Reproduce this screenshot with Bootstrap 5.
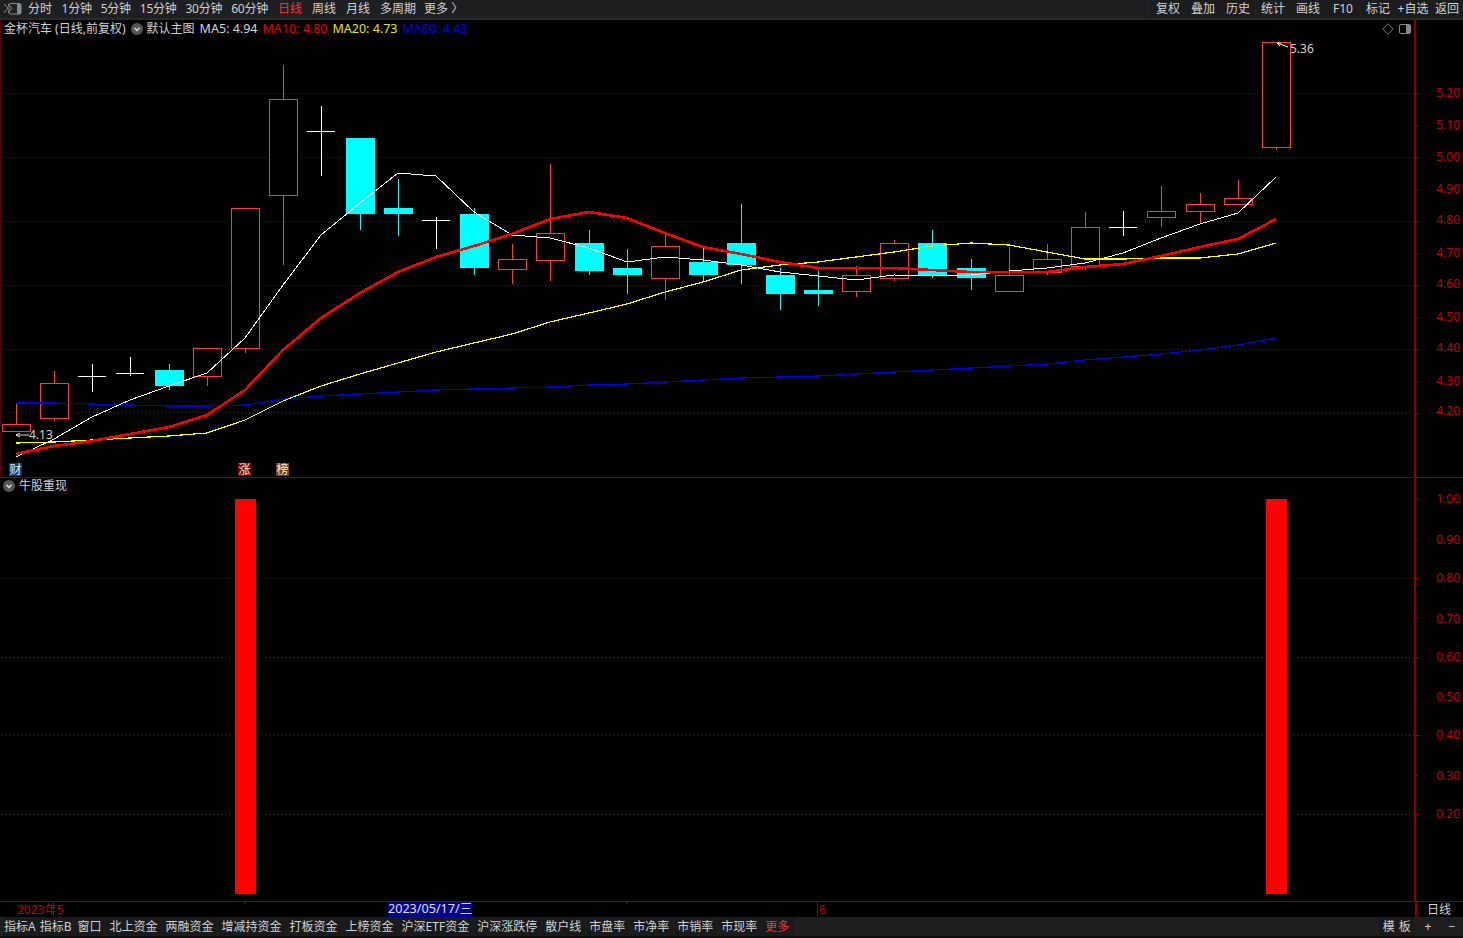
<!DOCTYPE html>
<html lang="zh-CN">
<head>
<meta charset="utf-8">
<title>金杯汽车</title>
<link href="https://cdn.jsdelivr.net/npm/bootstrap@5.3.0/dist/css/bootstrap.min.css" rel="stylesheet">
<style>
html,body{height:100%;background:#000;overflow:hidden}
.term{width:1463px;height:938px;background:#000;color:#d2d2d2;font:12px/1 "Noto Sans","Noto Sans CJK SC",sans-serif}
.topbar{height:20px;background:#1e1f21;border-bottom:2px solid #2a2a2a}
.per{color:#d2d2d2;margin-right:9.5px}
.per.dg{letter-spacing:-.25px;margin-right:9px}
.per.now{color:#ff3232;margin-left:1px;margin-right:10px}
.per.mid{margin-right:10px}
.per.last{margin-right:8px}
.perset{padding-left:4px}
.logo{width:20px;height:14px}
.topbtn{width:34px;height:18px;margin-left:1px;background:#1b1c1e;color:#d2d2d2;justify-content:center}
.topbtn.tail{width:32px}
.chartpane{height:457px}
.rule{height:1px;background:#800000}
.subpane{height:423px}
.chartpane svg,.subpane svg,.datesvg{display:block}
.legend{left:4px;top:3px;height:12px;white-space:nowrap}
.legend span{margin-right:5px}
.circ{width:12px;height:12px;margin-right:4px;flex:none}
.m5,.m10,.m20,.m60{font-size:12.5px}
.m5{color:#d8d8d8}.m10{color:#e60000}.m20{color:#e6e600}.m60{color:#0000e6}
.subtitle{left:3px;top:2px}
.tools{right:52px;top:3px;gap:5px}
.daterow{height:16px}
.dateunit{width:48px;border-left:2px solid #8b0000;color:#d2d2d2;justify-content:center;border-top:1px solid #800000;padding-right:2px}
.tabs{height:19px;background:#1f1f20;gap:1px;padding-left:2.5px}
.tabbar-tab{height:19px;padding:0 3.5px;background:#191a1c;color:#d2d2d2;border:0;border-radius:0;font:inherit;line-height:1}
.tabbar-tab.tight{padding:0 1.5px}
.tabbar-tab.hot{color:#ff3232}
.tabbar-mod{width:36px;margin-left:auto;letter-spacing:.5px;white-space:nowrap;padding:0}
.tabbar-pm{padding:0;background:#1f1f20}
.tabbar-pm.one{width:24px}.tabbar-pm.two{width:22px}
.foot{height:2px;background:#101010}
svg text{font:12px "Noto Sans","Noto Sans CJK SC",sans-serif}
svg text.wide{font-size:12.6px}
</style>
</head>
<body class="m-0">
<div class="term d-flex flex-column">

  <div class="topbar d-flex align-items-center">
    <svg class="logo flex-shrink-0 ms-1" viewBox="0 0 20 14"><path d="M0 2l4 4-4 5M4 2l4 4-4 5" fill="none" stroke="#8a8a8a" stroke-width="1"/><rect x="5" y="1.5" width="12" height="10.5" rx="1.5" fill="none" stroke="#8a8a8a"/><rect x="13" y="2" width="4" height="10" fill="#8a8a8a"/></svg>
    <div class="perset d-flex">
      <span class="per">分时</span><span class="per dg">1分钟</span><span class="per dg">5分钟</span><span class="per dg">15分钟</span><span class="per dg">30分钟</span><span class="per dg">60分钟</span><span class="per now">日线</span><span class="per mid">周线</span><span class="per mid">月线</span><span class="per last">多周期</span><span class="per">更多 〉</span>
    </div>
    <div class="ms-auto d-flex">
      <span class="topbtn d-flex align-items-center">复权</span><span class="topbtn d-flex align-items-center">叠加</span><span class="topbtn d-flex align-items-center">历史</span><span class="topbtn d-flex align-items-center">统计</span><span class="topbtn d-flex align-items-center">画线</span><span class="topbtn d-flex align-items-center">F10</span><span class="topbtn d-flex align-items-center">标记</span><span class="topbtn d-flex align-items-center text-nowrap">+自选</span><span class="topbtn tail d-flex align-items-center">返回</span>
    </div>
  </div>

  <div class="chartpane position-relative">
    <svg id="mainchart" width="1463" height="457" viewBox="0 20 1463 457"></svg>
    <div class="legend position-absolute d-flex align-items-center">
      <span>金杯汽车 (日线,前复权)</span>
      <svg class="circ" viewBox="0 0 12 12"><circle cx="6" cy="6" r="6" fill="#555"/><path d="M3.4 4.8L6 7.4l2.6-2.6" fill="none" stroke="#ddd" stroke-width="1.4"/></svg>
      <span>默认主图</span>
      <span class="m5">MA5: 4.94</span><span class="m10">MA10: 4.80</span><span class="m20">MA20: 4.73</span><span class="m60">MA60: 4.43</span>
    </div>
    <div class="tools position-absolute d-flex align-items-center">
      <svg width="12" height="12" viewBox="0 0 12 12"><path d="M6 .8L11.2 6 6 11.2.8 6z" fill="none" stroke="#777"/></svg>
      <svg width="12" height="12" viewBox="0 0 12 12"><rect x=".5" y="1.5" width="11" height="9" rx="1.5" fill="none" stroke="#888"/><rect x="7" y="2" width="4" height="8" fill="#888"/></svg>
    </div>
  </div>
  <div class="rule"></div>

  <div class="subpane position-relative">
    <svg id="subchart" width="1463" height="423" viewBox="0 478 1463 423"></svg>
    <div class="subtitle position-absolute d-flex align-items-center">
      <svg class="circ" viewBox="0 0 12 12"><circle cx="6" cy="6" r="6" fill="#555"/><path d="M3.4 4.8L6 7.4l2.6-2.6" fill="none" stroke="#ddd" stroke-width="1.4"/></svg>
      <span>牛股重现</span>
    </div>
  </div>

  <div class="daterow d-flex">
    <svg id="dateaxis" class="datesvg" width="1415" height="16" viewBox="0 901 1415 16"></svg>
    <div class="dateunit flex-grow-1 d-flex align-items-center">日线</div>
  </div>

  <div class="tabs d-flex align-items-stretch">
    <button class="tabbar-tab tight">指标A</button><button class="tabbar-tab tight">指标B</button><button class="tabbar-tab">窗口</button><button class="tabbar-tab">北上资金</button><button class="tabbar-tab">两融资金</button><button class="tabbar-tab">增减持资金</button><button class="tabbar-tab">打板资金</button><button class="tabbar-tab">上榜资金</button><button class="tabbar-tab">沪深ETF资金</button><button class="tabbar-tab">沪深涨跌停</button><button class="tabbar-tab">散户线</button><button class="tabbar-tab">市盘率</button><button class="tabbar-tab">市净率</button><button class="tabbar-tab">市销率</button><button class="tabbar-tab">市现率</button><button class="tabbar-tab hot">更多</button>
    <button class="tabbar-tab tabbar-mod">模 板</button><button class="tabbar-tab tabbar-pm one">+</button><button class="tabbar-tab tabbar-pm two">−</button>
  </div>
  <div class="foot"></div>
</div>

<script src="https://cdn.jsdelivr.net/npm/bootstrap@5.3.0/dist/js/bootstrap.bundle.min.js"></script>
<script>
const GRID='#b00000',AX='#8b0000',LAB='#c00000',RED='#ff3c3c',CY='#00ffff';
const crisp='shape-rendering="crispEdges"';
function hline(x1,x2,y,c,dash){return `<line x1="${x1}" x2="${x2}" y1="${y+.5}" y2="${y+.5}" stroke="${c}" ${dash?'stroke-dasharray="1 3"':''} ${crisp}/>`}
function vline(x,y1,y2,c){return `<line x1="${x+.5}" x2="${x+.5}" y1="${y1}" y2="${y2}" stroke="${c}" ${crisp}/>`}
function axis(top,bot,ticks,dots){
  let s='';
  dots.forEach(y=>s+=hline(1,1414,y,GRID,true));
  s+=`<rect x="1414" y="${top}" width="2" height="${bot-top}" fill="${AX}"/>`;
  ticks.forEach(t=>{
    s+=hline(1416,t.major?1420:1418,t.y,AX);
    s+=`<text x="1460" y="${t.ly+4}" text-anchor="end" fill="${LAB}">${t.l}</text>`;
  });
  return s;
}
// candles: [x, kind, top, bottom, high, low]  r red hollow, c cyan solid, w white doji
const C=[
[16,'r',424,431,403,431],[54,'r',383,418,371,421],[92,'w',376,376,364,392],[130,'w',373,373,357,376],
[169,'c',370,386,364,390],[207,'r',348,376,348,386],[245,'r',208,348,208,353],[283,'r',99,195,65,265],
[321,'w',131,131,106,176],[360,'c',138,214,138,230],[398,'c',208,214,179,236],[436,'w',220,220,217,249],
[474,'c',214,268,208,275],[512,'r',259,269,244,284],[550,'r',233,260,164,281],[589,'c',243,271,230,275],
[627,'c',268,275,249,294],[665,'r',246,278,234,300],[703,'c',262,275,248,281],[741,'c',243,265,204,284],
[780,'c',275,294,268,310],[818,'c',290,294,271,306],[856,'r',275,291,266,297],[894,'r',243,278,240,281],
[932,'c',243,275,230,278],[971,'c',268,278,259,290],[1009,'r',275,291,247,291],[1047,'r',259,272,244,275],
[1085,'r',227,266,212,270],[1123,'w',227,227,211,236],[1161,'r',211,217,186,227],[1200,'r',204,211,193,224],
[1238,'r',198,204,180,205],[1276,'r',42,147,42,150]];
const X=C.map(c=>c[0]);
const MA5=[457,439,417,400,386,373,338,285,235,203,173,176,212,235,238,248,262,257,260,265,272,276,280,275,276,275,271,268,263,253,238,224,213,177];
const MA10=[454,446,441,434,427,415,390,350,318,293,272,257,246,234,219,212,218,233,247,254,262,268,268,268,270,272,272,272,267,264,256,247,239,219];
const MA20=[443,442,440,438,436,433,420,401,386,374,363,352,343,334,322,313,304,292,282,270,265,262,257,252,246,243,245,252,259,259,258,258,254,243];
const MA60=[403,403,404,405,406,406,405,399,396,394,392,390,389,388,387,385,384,382,380,378,377,376,374,372,370,368,366,364,360,357,354,350,345,338];
const poly=(ys,c,w)=>`<polyline points="${ys.map((y,i)=>X[i]+','+y).join(' ')}" fill="none" stroke="${c}" stroke-width="${w}" ${crisp}/>`;
let m='';
m+=`<rect x="0" y="20" width="1" height="457" fill="#600000"/>`;
const lab=[['5.20',93,93,1],['5.10',125,125,0],['5.00',157,157,1],['4.90',189,189,0],['4.80',221,220,1],['4.70',253,253,0],['4.60',285,284,1],['4.50',317,317,0],['4.40',349,348,1],['4.30',381,381,0],['4.20',413,411,1]];
m+=axis(20,477,lab.map(a=>({l:a[0],y:a[1],ly:a[2],major:a[3]})),[93,157,221,285,349,412]);
C.forEach(([x,k,t,b,h,l])=>{
  if(k==='w'){
    m+=vline(x,h,l,'#fff')+hline(x-14,x+14,t,'#fff');
  }else if(k==='c'){
    m+=`<rect x="${x-17}" y="${t}" width="35" height="${b-t}" fill="#000"/>`;
    m+=vline(x,h,l,CY)+`<rect x="${x-14}" y="${t}" width="29" height="${b-t}" fill="${CY}"/>`;
  }else{
    m+=`<rect x="${x-17}" y="${t}" width="35" height="${b-t}" fill="#000"/>`;
    m+=vline(x,h,l,RED)+`<rect x="${x-13.5}" y="${t+.5}" width="28" height="${b-t}" fill="#000" stroke="${RED}" ${crisp}/>`;
  }
});
m+=poly(MA60,'#0000e6',1.2)+poly(MA5,'#fff',1)+poly(MA20,'#ffff00',1.2)+poly(MA10,'#ff0000',2.6);
m+=`<path d="M1277 43l11 4M1277 43l4 0M1277 43l3 3" stroke="#fff" fill="none"/><text x="1290" y="53" fill="#d2d2d2">5.36</text>`;
m+=`<path d="M16 435h13M16 435l4-2M16 435l4 2" stroke="#ddd" fill="none"/><text x="29" y="439" fill="#d2d2d2">4.13</text>`;
[[9,'财','#0d3c6e'],[238,'涨','#7a0000'],[276,'榜','#7a4000']].forEach(([x,t,c])=>{
  m+=`<rect x="${x}" y="463" width="13" height="13" fill="${c}"/><text x="${x+.5}" y="474" fill="#eee">${t}</text>`;
});
document.getElementById('mainchart').innerHTML=m;

let s='';
const lab2=[['1.00',499,499,1],['0.90',539,540,0],['0.80',578,578,1],['0.70',618,619,0],['0.60',657,657,1],['0.50',697,697,0],['0.40',735,735,1],['0.30',775,776,0],['0.20',814,814,1]];
s+=axis(478,901,lab2.map(a=>({l:a[0],y:a[1],ly:a[2],major:a[3]})),[578,657,735,814]);
[235,1266].forEach(x=>{s+=`<rect x="${x-3}" y="499" width="27" height="395" fill="#000"/><rect x="${x}" y="499" width="21" height="395" fill="#ff0000"/>`});
document.getElementById('subchart').innerHTML=s;

let d=`<rect x="0" y="901" width="1415" height="1" fill="${AX}"/>`;
d+=`<text x="17" y="914" fill="#c00000">2023年5</text><rect x="53" y="901" width="1" height="16" fill="${AX}"/>`;
d+=`<text x="819" y="914" fill="#c00000">6</text><rect x="817" y="901" width="1" height="16" fill="${AX}"/>`;
d+=`<rect x="244" y="902" width="1" height="2" fill="${AX}"/><rect x="626" y="902" width="1" height="2" fill="${AX}"/>`;
d+=`<rect x="388" y="902" width="84" height="15" fill="#000090"/><text class="wide" x="388" y="913" fill="#e0e0e0">2023/05/17/三</text>`;
document.getElementById('dateaxis').innerHTML=d;
</script>
</body>
</html>
